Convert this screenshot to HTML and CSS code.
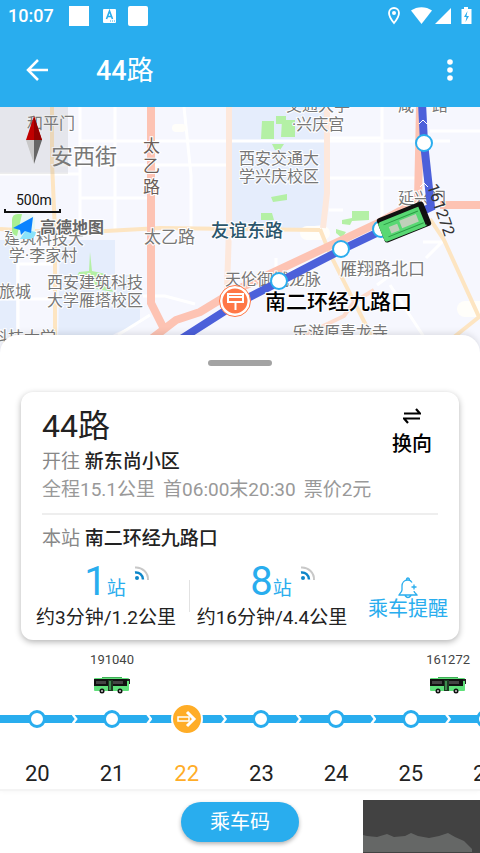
FILE: index.html
```
<!DOCTYPE html>
<html lang="zh-CN">
<head>
    <meta charset="UTF-8">
    <meta name="viewport" content="width=device-width, initial-scale=1.0">
    <title>44路</title>
    <link rel="stylesheet" href="styles.css">
</head>
<body>
<svg class="sprite" aria-hidden="true">
    <symbol id="bus" viewBox="0 0 38 17">
        <path d="M9 0h20v2H9z" fill="#3fae55"/>
        <rect x="1" y="1" width="35" height="13" rx="1" fill="#5fe07a"/>
        <path d="M1 2h33v7H1z" fill="#111"/>
        <path d="M3 4h10v3H3zM20 4h10v3H20z" fill="#444"/>
        <path d="M15 3h5v11h-5z" fill="#1d3a22"/>
        <path d="M17 4v9" stroke="#5fe07a"/>
        <path d="M34 2h3v5h-1V4h-2z" fill="#222"/>
        <circle cx="9" cy="14" r="2.5" fill="#111"/>
        <circle cx="27" cy="14" r="2.5" fill="#111"/>
        <circle cx="9" cy="14" r="1" fill="#ccc"/>
        <circle cx="27" cy="14" r="1" fill="#ccc"/>
    </symbol>
    <symbol id="signal" viewBox="0 0 16 16">
        <circle cx="3" cy="12" r="2" fill="#0d86c9"/>
        <path d="M1 6.5a7 7 0 0 1 8 7" fill="none" stroke="#0d86c9" stroke-width="2.5"/>
        <path d="M1 1.5a12 12 0 0 1 13 12.5" fill="none" stroke="#c8c8c8" stroke-width="2"/>
    </symbol>
</svg>

<header class="header">
    <div class="status">
        <span class="clock">10:07</span>
        <svg class="notices" width="80" height="22" viewBox="0 0 80 22" fill="#fff">
            <rect x="0" y="1" width="20" height="20"/>
            <rect x="34" y="4" width="13" height="14" rx="1"/>
            <path d="M37.5 14l3-8 3 8M38.5 11.5h4" fill="none" stroke="#29adee" stroke-width="1.6"/>
            <path d="M41 16h5" stroke="#29adee" stroke-dasharray="1 1"/>
            <rect x="59" y="1" width="20" height="20" rx="2"/>
        </svg>
        <svg class="system" width="84" height="20" viewBox="0 0 84 20" fill="#fff">
            <path d="M6 2a5 5 0 0 0-5 5c0 4 5 10 5 10s5-6 5-10a5 5 0 0 0-5-5z" fill="none" stroke="#fff" stroke-width="1.8"/>
            <circle cx="6" cy="7" r="2"/>
            <path d="M23 4.5c6-4.5 15-4.5 21 0L33.5 18z"/>
            <path d="M47 18L63 2v16z"/>
            <path d="M76 1h4v2h3.5v15h-10V3H76z"/>
            <path d="M79.5 5L76 11h2.5l-1 5 3.5-6h-2.5z" fill="#29adee"/>
        </svg>
    </div>
    <div class="title-bar">
        <button class="icon-button" type="button" aria-label="返回">
            <svg width="24" height="24" viewBox="0 0 24 24" fill="none" stroke="#fff" stroke-width="2.5">
                <path d="M23 12H3M13 2L3 12l10 10"/>
            </svg>
        </button>
        <h1>44<span>路</span></h1>
        <button class="icon-button" type="button" aria-label="更多">
            <svg width="24" height="24" viewBox="0 0 24 24" fill="#fff">
                <circle cx="12" cy="4" r="2.8"/>
                <circle cx="12" cy="12" r="2.8"/>
                <circle cx="12" cy="20" r="2.8"/>
            </svg>
        </button>
    </div>
</header>

<main>
    <svg class="map" viewBox="0 0 480 248" preserveAspectRatio="xMidYMin slice">
        <!-- campuses and parks -->
        <path class="campus" d="M232 0h93v85l-4 33-40 6h-49z"/>
        <path class="campus" d="M60 133h55v35h15v20h10v28l-24 10-20 13H58z"/>
        <path class="campus" d="M0 133h16v95H0z"/>
        <g class="park">
            <path d="M262 14h12v18h-13zM276 9h10v8h-10zM282 13h13v17h-14zM272 37h12l-4 6h-5zM271 90l16-3v6l-14 2zM261 106h11l2 7h-13zM342 113l10-2v-7h17v9l-17 1-2 4-8-1z"/>
            <path d="M90 145l2 19 14 3v10l8 8-18-3-8-10-11-3 2-4 10-1zM336 122l10 3-4 6-6-5z"/>
        </g>
        <!-- side streets -->
        <g class="street">
            <path d="M0 67h80M80 34h370M54 58h175M80 91h70M80 0v125M115 0v122M184 0l7 68v60M18 133v95M18 157h35M0 192h55"/>
            <path d="M329 31h53M329 71h100M382 0v124M430 24h50M329 103h14"/>
            <path d="M276 151v24l20-13M143 189h22l30 8M118 228l32-20M377 178l30-22M426 151l16-16h-19M390 178l36 55"/>
        </g>
        <g class="cloud">
            <rect x="300" y="119" width="30" height="14" rx="7"/>
            <rect x="457" y="194" width="36" height="16" rx="8"/>
            <rect x="172" y="17" width="14" height="8" rx="4"/>
        </g>
        <!-- main roads -->
        <g class="avenue">
            <path d="M52 0v55l3 70v118M0 122l70 4 90-5 160 2M320 122l10 25 47 93M430 112l14 21 35 77-30 24-70 14"/>
        </g>
        <path class="avenue wide" d="M229 0v122l-2 60M327 0v86l-4 35"/>
        <path class="highway" d="M151 0v196l12 24M440 98h40M420 0l-2 94-40 22-142 67-36 22-24 8-26 20"/>
        <path class="highway thin" d="M290 235l54-26 10-14 20-12"/>

        <!-- place names -->
        <g class="place">
            <text x="27" y="22">和平门</text>
            <text x="286" y="4">交通大学</text>
            <text x="292" y="23">·兴庆宫</text>
            <text x="398" y="4">咸</text>
            <text x="432" y="4">路</text>
            <text x="239" y="57">西安交通大</text>
            <text x="239" y="75">学兴庆校区</text>
            <text x="398" y="97">延兴门</text>
            <text x="4" y="137">建筑科技大</text>
            <text x="9" y="154">学·李家村</text>
            <text x="-1" y="190">旅城</text>
            <text x="47" y="181">西安建筑科技</text>
            <text x="47" y="199">大学雁塔校区</text>
            <text x="225" y="178">天伦御城龙脉</text>
            <text x="292" y="231">乐游原青龙寺</text>
            <text x="-8" y="236">科技大学</text>
        </g>
        <g class="place medium">
            <text x="144" y="136">太乙路</text>
            <text x="340" y="168">雁翔路北口</text>
        </g>
        <text class="place large" x="51" y="57">安西街</text>
        <g class="place road">
            <text x="143" y="45">太</text>
            <text x="143" y="65">乙</text>
            <text x="143" y="86">路</text>
        </g>
        <text class="place district" x="211" y="130">友谊东路</text>

        <!-- route -->
        <path class="route" d="M170 239l66-42 43-22 62-32 90-43-7-64-2-40"/>
        <path class="route-arrow" d="M419 17l4-4 4 4M420 80l4-4 4 4"/>
        <g class="route-stop">
            <circle cx="424" cy="36" r="8"/>
            <circle cx="381" cy="122" r="8"/>
            <circle cx="341" cy="142" r="8"/>
            <circle cx="279" cy="174" r="8"/>
        </g>
        <g class="here">
            <circle cx="235" cy="194" r="14" fill="#ff7746" stroke="#fff" stroke-width="3"/>
            <circle cx="235" cy="194" r="15.5" fill="none" stroke="#ff7746"/>
            <path d="M228 187h15v8h-15zM235.5 195v8M228 190h15" fill="none" stroke="#fff" stroke-width="2"/>
        </g>
        <text class="station-name" x="265" y="202">南二环经九路口</text>
        <g transform="translate(404 115) rotate(-22)">
            <rect x="-25" y="-13" width="50" height="26" rx="3" fill="#111"/>
            <rect x="-25" y="-9" width="46" height="21" rx="3" fill="#58d873"/>
            <path d="M-20 -5h37M-20 8h38" stroke="#2c9a45"/>
            <path d="M-16 -1h9v7h-9zM-4 -3h18v8H-4z" fill="#bfd0b9"/>
            <path d="M21 -11v22" stroke="#111" stroke-width="4"/>
        </g>
        <text class="plate" transform="translate(427 79) rotate(71)">161272</text>

        <!-- compass, scale and map logo -->
        <path d="M0 0h68v67H0z" fill="#888" fill-opacity=".15"/>
        <path d="M34 9l8 24H26z" fill="#c00000"/>
        <path d="M34 9l8 24h-8z" fill="#930000"/>
        <path d="M26 33h8v24z" fill="#c8c8c8"/>
        <path d="M42 33h-8v24z" fill="#666"/>
        <text class="scale" x="16" y="98">500m</text>
        <path d="M5 102v3h55v-3" fill="none" stroke="#111" stroke-width="2"/>
        <rect x="12" y="107" width="23" height="25" rx="6" fill="#e7f7f5"/>
        <path d="M12 113q0-6 6-6h4l-5 22q-5-1-5-6z" fill="#a9ef92"/>
        <path d="M20 132l6-9 10 2q-1 7-7 7z" fill="#8be3fa"/>
        <path d="M33 110L13 121l7 2 1 5 4-4 6 2z" fill="#0b83ff"/>
        <text class="map-logo" x="40" y="126">高德地图</text>
    </svg>

    <section class="sheet">
        <div class="handle"></div>
        <div class="card">
            <div class="line-info">
                <div>
                    <h2>44路</h2>
                    <p class="muted">开往 <strong>新东尚小区</strong></p>
                </div>
                <button class="swap" type="button">
                    <svg width="18" height="16" viewBox="0 0 18 16" fill="none" stroke="#000" stroke-width="2.2">
                        <path d="M1 5.500h16L13 1M17 10.500H1L5 15"/>
                    </svg>
                    换向
                </button>
            </div>
            <p class="schedule"><span>全程15.1公里</span><span>首06:00末20:30</span><span>票价2元</span></p>
            <p class="muted current">本站 <strong>南二环经九路口</strong></p>
            <div class="arrivals">
                <div class="arrival">
                    <p class="count"><b>1</b>站<svg width="16" height="16"><use href="#signal"/></svg></p>
                    <p>约3分钟/1.2公里</p>
                </div>
                <div class="arrival">
                    <p class="count"><b>8</b>站<svg width="16" height="16"><use href="#signal"/></svg></p>
                    <p>约16分钟/4.4公里</p>
                </div>
                <button class="remind" type="button">
                    <svg width="22" height="22" viewBox="0 0 22 22" fill="none" stroke="#29adee" stroke-width="1.3">
                        <path d="M15 5.500C14 3.500 12.500 3 11 3 7 3 5 6 5 9v4c0 2-3 4-3 5h18c0-1-3-2-3-4M9.500 3q0-2 1.500-2t1.500 2M8 18.500q3 4 6 0M17 7.500v5M14.500 10h5"/>
                    </svg>
                    乘车提醒
                </button>
            </div>
        </div>

        <div class="vehicles">
            <div class="vehicle at-21">191040<svg width="38" height="17"><use href="#bus"/></svg></div>
            <div class="vehicle after-25">161272<svg width="38" height="17"><use href="#bus"/></svg></div>
        </div>
        <ol class="stops">
            <li><i class="dot"></i>20</li>
            <li><i class="dot"></i>21</li>
            <li class="active">
                <i class="dot">
                    <svg width="20" height="18" viewBox="0 0 20 18" fill="none" stroke="#fff">
                        <path d="M1 7h11v4H1z" stroke-width="1.5"/>
                        <path d="M10 2l7 7-7 7" stroke-width="3"/>
                    </svg>
                </i>22
            </li>
            <li><i class="dot"></i>23</li>
            <li><i class="dot"></i>24</li>
            <li><i class="dot"></i>25</li>
            <li><i class="dot"></i>26</li>
        </ol>
    </section>
</main>

<footer class="footer">
    <button class="ride-code" type="button">乘车码</button>
    <svg class="thumb" width="117" height="53" viewBox="0 0 117 53">
        <path d="M0 0h117v53H0z" fill="#424242"/>
        <path d="M0 35l4 1 10 1 10-3 7 3 11-1 6-3 7 3 11 2 10-2 9-3 7 4 9 4 8 8v3H0z" fill="#656766"/>
    </svg>
</footer>
</body>
</html>
```
FILE: styles.css
```
* {
    box-sizing: border-box;
}

body {
    margin: 0;
    min-height: 100vh;
    display: flex;
    flex-direction: column;
    overflow-x: hidden;
    background: #fff;
    color: #222;
    font-family: Roboto, "Noto Sans CJK SC", sans-serif;
    font-size: 19px;
    line-height: 28px;
}

h1, h2, p, ol {
    margin: 0;
    padding: 0;
}

button {
    border: none;
    padding: 0;
    background: none;
    font: inherit;
    cursor: pointer;
}

svg {
    display: block;
}

.sprite {
    position: absolute;
    width: 0;
    height: 0;
}

/* header */
.header {
    background: #29adee;
    color: #fff;
}

.status {
    display: flex;
    align-items: center;
    height: 32px;
    padding: 0 8px;
}

.clock {
    font-size: 18px;
    font-weight: 500;
}

.notices {
    margin-left: 15px;
}

.system {
    margin-left: auto;
}

.title-bar {
    display: flex;
    align-items: center;
    height: 75px;
    padding: 0 18px 0 25px;
}

.title-bar h1 {
    flex: 1;
    margin-left: 47px;
    padding-top: 2px;
    font-size: 27px;
    font-weight: 500;
}

.title-bar h1 span {
    font-weight: 400;
}

/* map */
.map {
    width: 100%;
    height: 248px;
    background: #f6f7fe;
}

.campus {
    fill: #e5edfc;
}

.park {
    fill: #b4f0a5;
}

.street {
    fill: none;
    stroke: #fff;
    stroke-width: 3;
}

.cloud {
    fill: #fffefa;
}

.avenue {
    fill: none;
    stroke: #fde5c2;
    stroke-width: 4;
}

.avenue.wide {
    stroke: #fde8dc;
    stroke-width: 6;
}

.highway {
    fill: none;
    stroke: #fdc3b3;
    stroke-width: 8;
}

.highway.thin {
    stroke: #fddccd;
    stroke-width: 4;
}

.place {
    fill: #777;
    stroke: #fff;
    stroke-width: 2px;
    paint-order: stroke;
    font-size: 16px;
}

.place.medium {
    font-size: 17px;
}

.place.large {
    font-size: 22px;
}

.place.road {
    fill: #6b5d58;
    font-size: 17px;
}

.place.district {
    fill: #2b566b;
    font-size: 18px;
    font-weight: 500;
}

.route {
    fill: none;
    stroke: #4c60da;
    stroke-width: 8;
}

.route-arrow {
    fill: none;
    stroke: #fff;
}

.route-stop {
    fill: #fff;
    stroke: #29adee;
    stroke-width: 2;
}

.station-name {
    fill: #000;
    stroke: #fff;
    stroke-width: 2px;
    paint-order: stroke;
    font-size: 21px;
    font-weight: 500;
}

.plate {
    fill: #333;
    font-size: 16px;
}

.scale {
    fill: #111;
    font-size: 14px;
}

.map-logo {
    fill: #666;
    stroke: #fff;
    stroke-width: 2px;
    paint-order: stroke;
    font-size: 16px;
    font-weight: 700;
}

/* bottom sheet */
.sheet {
    position: relative;
    margin-top: -20px;
    padding-top: 25px;
    border-radius: 18px 18px 0 0;
    background: #fff;
    box-shadow: 0 -2px 6px rgba(0, 0, 0, 0.1);
}

.handle {
    width: 64px;
    height: 6px;
    margin: 0 auto;
    border-radius: 3px;
    background: #a3a3a3;
}

.card {
    margin: 26px 21px 0;
    padding: 14px 21px 8px;
    border-radius: 12px;
    box-shadow: 0 2px 6px rgba(0, 0, 0, 0.3);
}

.line-info {
    display: flex;
    justify-content: space-between;
    align-items: flex-start;
}

.line-info h2 {
    margin-bottom: 2px;
    font-size: 32px;
    font-weight: 400;
    line-height: 40px;
}

.muted {
    color: #888;
}

.muted strong {
    color: #222;
    font-weight: 500;
}

.swap {
    display: flex;
    flex-direction: column;
    align-items: center;
    gap: 6px;
    margin: 2px 6px 0 0;
    color: #000;
    font-size: 20px;
    font-weight: 500;
}

.schedule {
    display: flex;
    gap: 8px;
    padding-bottom: 9px;
    border-bottom: 2px solid #eee;
    color: #999;
    white-space: nowrap;
}

.current {
    margin-top: 10px;
}

.arrivals {
    display: flex;
    justify-content: space-between;
    align-items: center;
    margin: 7px -10px 0 -6px;
    white-space: nowrap;
}

.arrival {
    position: relative;
    text-align: center;
}

.arrival:first-child::after {
    content: "";
    position: absolute;
    right: -14px;
    top: 20px;
    width: 1px;
    height: 32px;
    background: #e2e2e2;
}

.count {
    display: flex;
    justify-content: center;
    align-items: baseline;
    height: 44px;
    padding-left: 22px;
    color: #29adee;
    line-height: 44px;
}

.count b {
    font-size: 40px;
    font-weight: 400;
}

.count svg {
    align-self: flex-start;
    margin: 6px 0 0 8px;
}

.remind {
    display: flex;
    flex-direction: column;
    align-items: center;
    margin-top: 4px;
    color: #29adee;
    font-size: 20px;
    line-height: 20px;
}

/* stops along the line */
.vehicles {
    display: grid;
    grid-template-columns: repeat(13, 7.78%);
    margin-top: 10px;
    overflow: hidden;
}

.vehicle {
    display: flex;
    flex-direction: column;
    align-items: center;
    gap: 7px;
    color: #444;
    font-size: 13px;
    line-height: 20px;
}

.at-21 {
    grid-column: 3 / span 2;
}

.after-25 {
    grid-column: 12 / span 2;
}

.stops {
    display: flex;
    margin-top: 9px;
    padding-bottom: 1px;
    overflow: hidden;
    list-style: none;
    border-bottom: 2px solid #f4f4f4;
}

.stops li {
    position: relative;
    flex: 0 0 15.56%;
    display: flex;
    flex-direction: column;
    align-items: center;
    gap: 25px;
    background: linear-gradient(#29adee, #29adee) 0 12px / 100% 8px no-repeat;
    font-size: 22px;
}

/* chevron between two stops */
.stops li::after {
    content: "";
    position: absolute;
    right: -3px;
    top: 12px;
    width: 6px;
    height: 8px;
    background: #fff;
    clip-path: polygon(0 0, 50% 0, 100% 50%, 50% 100%, 0 100%, 50% 50%);
    z-index: 1;
}

.dot {
    display: flex;
    justify-content: center;
    align-items: center;
    width: 18px;
    height: 18px;
    margin: 7px 0;
    border: 3px solid #29adee;
    border-radius: 50%;
    background: #fff;
}

.active {
    color: #ffad27;
}

.active .dot {
    width: 32px;
    height: 32px;
    margin: 0;
    border: 2px solid #fff;
    background: #ffad27;
}

/* footer */
.footer {
    flex: 1;
    display: grid;
    grid-template-columns: 1fr 118px 1fr;
    align-items: center;
    min-height: 61px;
}

.ride-code {
    grid-column: 2;
    height: 40px;
    border-radius: 20px;
    background: #29adee;
    box-shadow: 0 2px 4px rgba(0, 0, 0, 0.3);
    color: #fff;
    font-size: 20px;
}

.thumb {
    align-self: end;
    justify-self: end;
}
```
